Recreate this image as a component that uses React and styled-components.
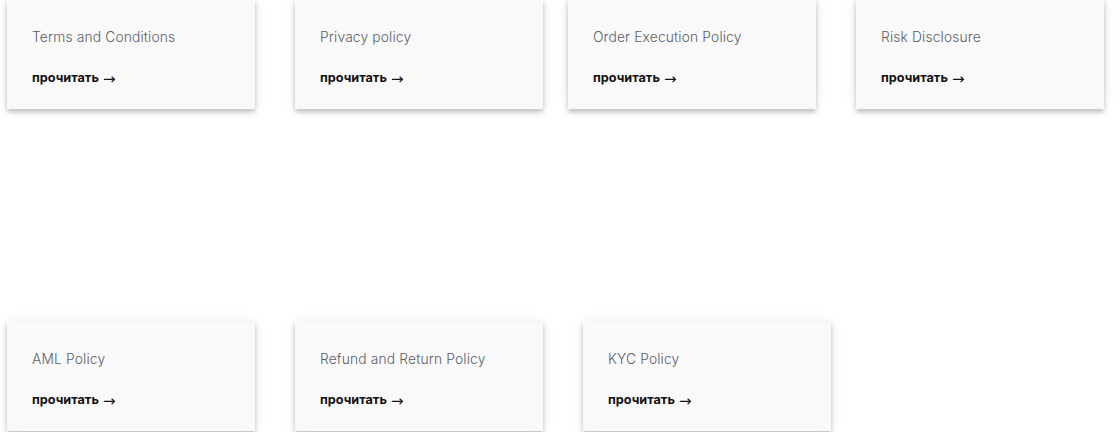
import React from "react";
import styled, { createGlobalStyle } from "styled-components";

const GlobalStyle = createGlobalStyle`
      body {
            margin: 0;
            background: #ffffff;
            font-family: Inter, "Open Sans", "Liberation Sans", sans-serif;
      }
`;

const Page = styled.div`
      width: 1120px;
      height: 432px;
      overflow: hidden;
      padding-left: 7px;
      box-sizing: border-box;
`;

const Grid = styled.div`
      display: grid;
      grid-template-columns: repeat(4, 248px);
      column-gap: 40px;
      row-gap: 212px;
      margin-top: -1px;
`;

const Card = styled.div`
      background: #f9f9f9;
      width: 248px;
      height: 110px;
      box-sizing: border-box;
      padding: 28px 25px 0 25px;
      margin-left: ${(p) => (p.$shift ? `${p.$shift}px` : "0")};
      box-shadow: 0 3px 5px rgba(0, 0, 0, 0.24), 0 0 14px rgba(0, 0, 0, 0.06);
`;

const Title = styled.div`
      font-size: 13.8px;
      line-height: 20px;
      font-weight: 300;
      color: #5c6068;
      letter-spacing: 0.15px;
`;

const ReadLink = styled.a`
      display: inline-flex;
      align-items: center;
      gap: 4px;
      margin-top: 22px;
      font-size: 12.7px;
      line-height: 18px;
      font-weight: 700;
      color: #111111;
      text-decoration: none;
`;

const Arrow = styled.span`
      font-family: "Noto Sans", "DejaVu Sans", sans-serif;
      font-weight: 400;
      font-size: 15px;
      color: #111111;
`;

const docs = [
      { title: "Terms and Conditions" },
      { title: "Privacy policy" },
      { title: "Order Execution Policy", shift: -15 },
      { title: "Risk Disclosure", shift: -15 },
      { title: "AML Policy" },
      { title: "Refund and Return Policy" },
      { title: "KYC Policy" },
];

function App() {
      return (
            <Page>
                  <GlobalStyle />
                  <Grid>
                        {docs.map((d) => (
                              <Card key={d.title} $shift={d.shift}>
                                    <Title>{d.title}</Title>
                                    <ReadLink href="#">
                                          прочитать <Arrow>→</Arrow>
                                    </ReadLink>
                              </Card>
                        ))}
                  </Grid>
            </Page>
      );
}

export default App;
